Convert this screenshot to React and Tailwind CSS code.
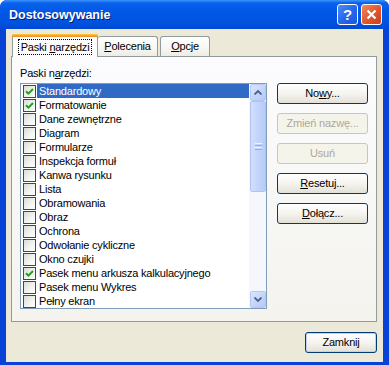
import React from 'react';

const items = [
  { label: 'Standardowy', checked: true, selected: true },
  { label: 'Formatowanie', checked: true },
  { label: 'Dane zewnętrzne' },
  { label: 'Diagram' },
  { label: 'Formularze' },
  { label: 'Inspekcja formuł' },
  { label: 'Kanwa rysunku' },
  { label: 'Lista' },
  { label: 'Obramowania' },
  { label: 'Obraz' },
  { label: 'Ochrona' },
  { label: 'Odwołanie cykliczne' },
  { label: 'Okno czujki' },
  { label: 'Pasek menu arkusza kalkulacyjnego', checked: true },
  { label: 'Pasek menu Wykres' },
  { label: 'Pełny ekran' },
];

const CheckBox = ({ checked }) => (
  <span className="w-[13px] h-[13px] shrink-0 border border-[#1C5180] bg-[linear-gradient(135deg,#DCDCD7_0%,#F4F4F0_60%,#FFFFFF_100%)] flex items-center justify-center">
    {checked && (
      <svg width="9" height="9" viewBox="0 0 9 9">
        <path d="M1 4.2 L3.4 6.6 L8 2" fill="none" stroke="#21A121" strokeWidth="2" />
      </svg>
    )}
  </span>
);

const XpButton = ({ children, disabled, wide = 'w-[91px]', isDefault }) => (
  <div
    className={
      `${wide} h-[21px] rounded-[3px] border flex items-center justify-center tracking-[-0.2px] ` +
      (disabled
        ? 'border-[#C9C7BA] bg-[#F5F4EA] text-[#ACA899]'
        : 'border-[#003C74] bg-[linear-gradient(180deg,#FFFFFF_0%,#F5F4EF_50%,#E3E0D6_100%)] text-black') +
      (isDefault ? ' shadow-[inset_0_0_0_1px_#BCD3F7]' : '')
    }
  >
    {children}
  </div>
);

const ScrollArrow = ({ down }) => (
  <div className="h-[17px] w-[16px] rounded-[2px] border border-[#B4C8F6] bg-[linear-gradient(135deg,#DCE6FE_0%,#C1D3FB_60%,#B4C8F6_100%)] flex items-center justify-center">
    <svg width="8" height="5" viewBox="0 0 8 5">
      <path d={down ? 'M0.5 0.5 L4 4 L7.5 0.5' : 'M0.5 4.5 L4 1 L7.5 4.5'} fill="none" stroke="#4D6185" strokeWidth="1.8" />
    </svg>
  </div>
);

export default function App() {
  return (
    <div className="w-[389px] h-[365px] flex flex-col rounded-t-[7px] overflow-hidden bg-[#0843D8] font-['Liberation_Sans',sans-serif] text-[11px] text-black">
      {/* title bar */}
      <div className="h-[29px] shrink-0 flex items-center pl-[9px] pr-[7px] bg-[linear-gradient(180deg,#3D95FF_0%,#0A62EC_10%,#0058E6_40%,#0053E0_75%,#0049D2_100%)]">
        <span className="text-white font-bold text-[12.5px] [text-shadow:1px_1px_0_#0A1E6E] pt-[1px]">Dostosowywanie</span>
        <div className="ml-auto flex gap-[3px] -mt-[1px]">
          <div className="w-[21px] h-[21px] rounded-[3px] border border-white bg-[linear-gradient(135deg,#4C8EFA_0%,#2867EE_50%,#1A55DE_100%)] flex items-center justify-center text-white font-bold text-[15px] leading-none">?</div>
          <div className="w-[21px] h-[21px] rounded-[3px] border border-white bg-[linear-gradient(135deg,#EE8A62_0%,#E2582F_50%,#C8401A_100%)] flex items-center justify-center">
            <svg width="11" height="11" viewBox="0 0 11 11">
              <path d="M1.5 1.5 L9.5 9.5 M9.5 1.5 L1.5 9.5" stroke="white" strokeWidth="2.2" />
            </svg>
          </div>
        </div>
      </div>

      {/* body */}
      <div className="flex-1 flex px-[6px] pb-[3px]">
        <div className="flex-1 bg-[#ECE9D8] flex flex-col pt-[5px] pl-[5px] pr-[6px]">
          {/* tabs */}
          <div className="h-[22px] flex items-end pl-[1px] relative z-10">
            <div className="h-[23px] w-[86px] -mb-px rounded-t-[3px] border-x border-[#919B9C] bg-[#FCFCFE] flex flex-col">
              <div className="h-[3px] rounded-t-[2px] bg-[linear-gradient(180deg,#FFC83C,#E68B2C)] -mx-px" />
              <div className="flex-1 flex items-center justify-center">
                <span className="border border-dotted border-black px-[2px] leading-[14px] tracking-[-0.2px]">
                  Paski <u className="underline-offset-1">n</u>arzędzi
                </span>
              </div>
            </div>
            <div className="h-[20px] w-[60px] rounded-t-[3px] border-t border-r border-[#919B9C] bg-[linear-gradient(180deg,#FFFFFF_0%,#F7F6F2_60%,#ECEBE6_100%)] flex items-center justify-center tracking-[-0.2px]">
              <span><u className="underline-offset-1">P</u>olecenia</span>
            </div>
            <div className="h-[20px] w-[50px] ml-[2px] rounded-t-[3px] border-x border-t border-[#919B9C] bg-[linear-gradient(180deg,#FFFFFF_0%,#F7F6F2_60%,#ECEBE6_100%)] flex items-center justify-center tracking-[-0.2px]">
              <span><u className="underline-offset-1">O</u>pcje</span>
            </div>
          </div>

          {/* panel */}
          <div className="h-[266px] border border-[#919B9C] bg-[linear-gradient(180deg,#FCFCFE_0%,#F4F3EE_100%)] pt-[10px] pl-[8px] flex flex-col">
            <div className="h-[13px] leading-[13px] tracking-[-0.2px]">
              Paski n<u className="underline-offset-1">a</u>rzędzi:
            </div>
            <div className="mt-[3px] flex gap-[10px]">
              {/* list box */}
              <div className="w-[247px] h-[226px] border border-[#7F9DB9] bg-white flex">
                <div className="flex-1 flex flex-col">
                  {items.map((it) => (
                    <div key={it.label} className="h-[14px] flex items-center">
                      <span className="ml-[2px]"><CheckBox checked={it.checked} /></span>
                      <span
                        className={
                          'ml-[1px] flex-1 h-[14px] pl-[2px] leading-[14px] whitespace-nowrap tracking-[-0.2px] ' +
                          (it.selected ? 'bg-[#316AC5] text-white' : '')
                        }
                      >
                        {it.label}
                      </span>
                    </div>
                  ))}
                </div>
                {/* scrollbar */}
                <div className="w-[17px] bg-[#F6F7FD] flex flex-col pl-[1px]">
                  <ScrollArrow />
                  <div className="h-[91px] w-[16px] rounded-[2px] border border-[#B0C4F4] bg-[linear-gradient(90deg,#D2DFFE_0%,#C3D4FC_50%,#B8CCFA_100%)] flex flex-col items-center justify-center gap-[1px]">
                    <div className="w-[7px] h-px bg-[#EEF3FF]" />
                    <div className="w-[7px] h-px bg-[#8CB0F8]" />
                    <div className="w-[7px] h-px bg-[#EEF3FF]" />
                    <div className="w-[7px] h-px bg-[#8CB0F8]" />
                  </div>
                  <div className="flex-1" />
                  <ScrollArrow down />
                </div>
              </div>

              {/* buttons */}
              <div className="flex flex-col gap-[9px]">
                <XpButton>No<u className="underline-offset-1">w</u>y...</XpButton>
                <XpButton disabled>Zmień nazwę...</XpButton>
                <XpButton disabled>Usuń</XpButton>
                <XpButton><u className="underline-offset-1">R</u>esetuj...</XpButton>
                <XpButton><u className="underline-offset-1">D</u>ołącz...</XpButton>
              </div>
            </div>
          </div>

          <div className="mt-[10px] flex justify-end">
            <XpButton wide="w-[72px]" isDefault>Zamknij</XpButton>
          </div>
        </div>
      </div>
    </div>
  );
}
